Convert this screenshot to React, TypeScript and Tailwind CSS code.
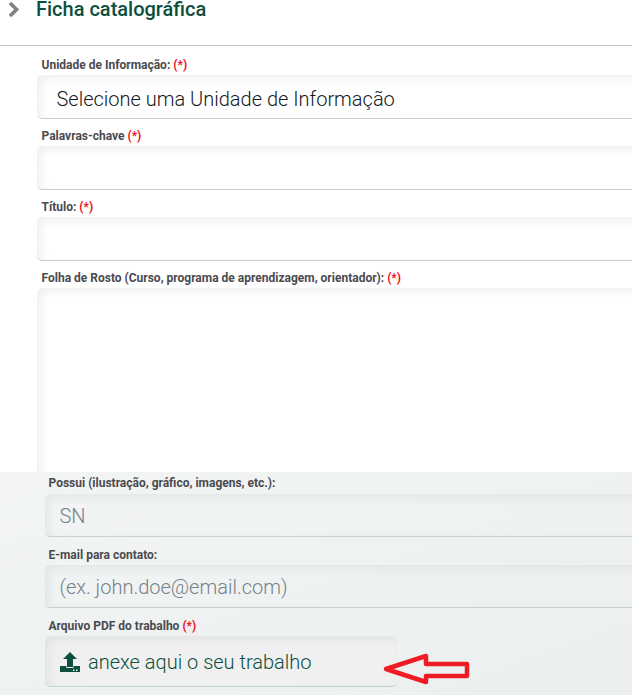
import React from "react";

const font = { fontFamily: "Roboto, sans-serif" };

function Req() {
  return <span className="text-[#f00f1e]"> (*)</span>;
}

function Label({ children }: { children: React.ReactNode }) {
  return <div className="text-[12px] leading-[14px] font-bold text-[#4a4a4f]">{children}</div>;
}

function Field({ h, children, className }: { h: string; children?: React.ReactNode; className?: string }) {
  return (
    <div
      className={
        "w-[720px] rounded-[5px] border-b border-[#c3d2cd] shadow-[inset_4px_4px_8px_rgba(150,165,160,0.16)] flex items-center " +
        h +
        " " +
        (className ?? "")
      }
    >
      {children}
    </div>
  );
}

export default function App() {
  return (
    <div className="w-[632px] h-[695px] overflow-hidden bg-white" style={font}>
      <div className="h-[46px] border-b border-[#bcc6c3] flex items-start">
        <svg className="ml-[7px] mt-[1px] shrink-0" width="13" height="18" viewBox="0 0 13 18">
          <path d="M3 2 L9.6 8.5 L3 15" fill="none" stroke="#808080" strokeWidth="3.6" />
        </svg>
        <div className="ml-[16px] text-[20px] leading-[18px] pb-[4px] font-medium text-[#0c4f3e]">Ficha catalográfica</div>
      </div>

      <div className="pl-[37px] h-[426px]">
        <div className="pl-[4.5px] pt-[12px] pb-[3px]">
          <Label>Unidade de Informação:<Req /></Label>
        </div>
        <Field h="h-[44px]">
          <span className="ml-[19.5px] pt-[5px] text-[20px] font-light text-[#15191c]">Selecione uma Unidade de Informação</span>
        </Field>
        <div className="pl-[4.5px] pt-[10px] pb-[3px]">
          <Label>Palavras-chave<Req /></Label>
        </div>
        <Field h="h-[44px]" />
        <div className="pl-[4.5px] pt-[10px] pb-[3px]">
          <Label>Título:<Req /></Label>
        </div>
        <Field h="h-[44px]" />
        <div className="pl-[4.5px] pt-[10px] pb-[3px]">
          <Label>Folha de Rosto (Curso, programa de aprendizagem, orientador):<Req /></Label>
        </div>
        <Field h="h-[190px]" className="border-b-0" />
      </div>

      <div className="h-[223px] bg-gradient-to-br from-[#f3f5f5] to-[#ecefef] pl-[45px] pt-[4px] relative">
        <div className="pl-[3.5px] pb-[4px]">
          <Label>Possui (ilustração, gráfico, imagens, etc.):</Label>
        </div>
        <Field h="h-[43px]">
          <span className="ml-[14.5px] pt-[1px] text-[20px] font-light text-[#75808a]">SN</span>
        </Field>
        <div className="pl-[3.5px] pt-[11px] pb-[3px]">
          <Label>E-mail para contato:</Label>
        </div>
        <Field h="h-[43px]">
          <span className="ml-[14.5px] pt-[1px] text-[20px] font-light text-[#75808a]">(ex. john.doe@email.com)</span>
        </Field>
        <div className="pl-[3.5px] pt-[11px] pb-[3px]">
          <Label>Arquivo PDF do trabalho<Req /></Label>
        </div>
        <Field h="h-[51px]" className="!w-[352px] bg-[#f0f0f0]">
          <svg className="ml-[15px] mr-[8px] mt-[1px]" width="20" height="20" viewBox="0 0 20 20">
            <path d="M0 14h6.5v2h7v-2H20v6H0z" fill="#0c4f3e" />
            <path d="M10 0l7 7h-4v8H7V7H3z" fill="#0c4f3e" />
            <rect x="13" y="17.5" width="1.5" height="1.5" fill="#f0f0f0" />
            <rect x="16" y="17.5" width="1.5" height="1.5" fill="#f0f0f0" />
          </svg>
          <span className="pt-[1px] text-[20px] font-light text-[#0c4f3e]">anexe aqui o seu trabalho</span>
        </Field>
        <svg className="absolute left-[382px] top-[180px]" width="90" height="34" viewBox="0 0 90 34">
          <path
            d="M4 17 L44 4 L44 12 L85 12 L85 24 L44 24 L44 30 Z"
            fill="none"
            stroke="#ee1c25"
            strokeWidth="4.5"
            strokeLinejoin="round"
          />
        </svg>
      </div>
    </div>
  );
}
